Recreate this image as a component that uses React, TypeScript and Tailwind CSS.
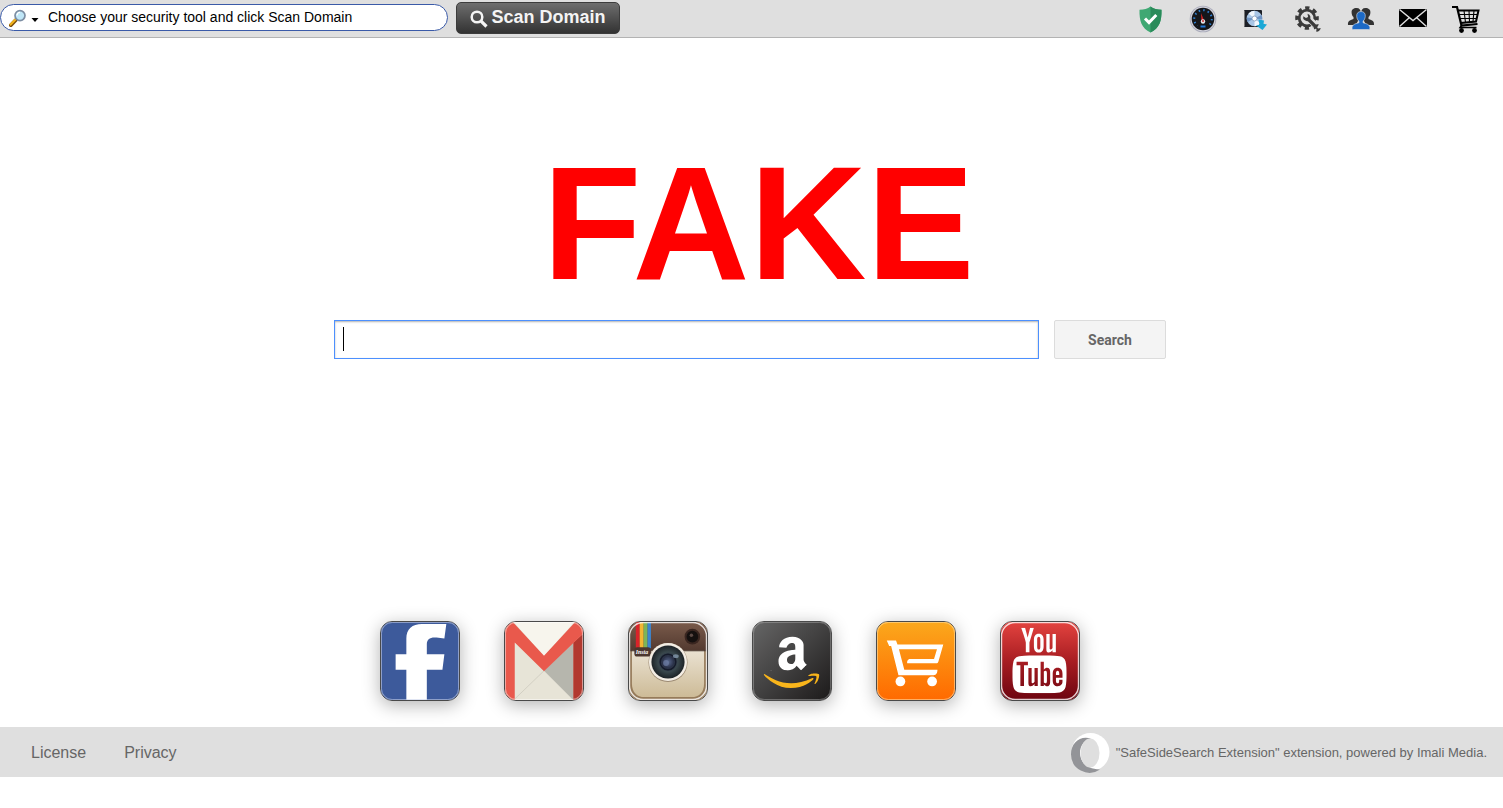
import type { ReactNode } from 'react'
import { FaAmazon } from 'react-icons/fa'
import { TfiYoutube } from 'react-icons/tfi'

interface LinkItem {
  label: string;
  icon: ReactNode;
}

function LensIcon() {
  return (
    <svg viewBox="0 0 18 18" className="h-[18px] w-[18px]" aria-hidden="true">
      <path d="M6.6 11.2 1.8 16.2" stroke="#7a4d0c" strokeWidth="3.8" strokeLinecap="round" />
      <path d="M6.2 10.8 1.6 15.6" stroke="#f2b31c" strokeWidth="2.2" strokeLinecap="round" />
      <circle cx="11" cy="6.6" r="5" fill="#bfe6f7" stroke="#7d8ea3" strokeWidth="1.7" />
      <path d="M8 6.4a3 3 0 0 1 3-3" stroke="#fff" strokeWidth="1.3" fill="none" />
    </svg>
  )
}

function ShieldIcon() {
  return (
    <svg viewBox="0 0 28 28" className="size-7" aria-hidden="true">
      <path d="M14.5 1.5c3 2.3 6.500 3 11 3.200.3 11-2 18.500-11 22.800C5.500 23.200 3.200 15.700 3.500 4.700c4.500-.2 8-.9 11-3.200Z" fill="#3fa873" />
      <path d="M14.5 1.5c3 2.3 6.500 3 11 3.200.3 11-2 18.500-11 22.800Z" fill="#2a8b5a" />
      <path d="m9 13.500 4 4 7.300-7.500" fill="none" stroke="#fff" strokeWidth="3" />
    </svg>
  )
}

function GaugeIcon() {
  return (
    <svg viewBox="0 0 28 28" className="size-7" aria-hidden="true">
      <circle cx="14" cy="14" r="13.3" fill="#a9abba" />
      <circle cx="14" cy="14" r="12.4" fill="#d3d3dc" />
      <circle cx="14" cy="14" r="11.3" fill="#14161b" />
      <circle cx="14" cy="14" r="8.8" fill="none" stroke="#2f7fd0" strokeWidth="2" strokeDasharray="1.5 3.1" />
      <path d="M7 22a10 10 0 0 0 14 0l-3-3h-8Z" fill="#14161b" />
      <path d="M11.500 21.500h5" stroke="#2277d8" strokeWidth="2" />
      <path d="m12 8 3 7.500-2.500.5Z" fill="#e02020" />
      <circle cx="14" cy="16.500" r="2.200" fill="#e4e6ec" />
      <circle cx="14" cy="16" r="1" fill="#c33" />
    </svg>
  )
}

function DiscIcon() {
  return (
    <svg viewBox="0 0 28 28" className="size-7" aria-hidden="true">
      <rect x="3" y="5" width="18" height="17" rx="1" fill="#1c1f26" />
      <path d="M3.5 6v15.500" stroke="#777" />
      <circle cx="13.500" cy="13.500" r="7.800" fill="#a9c6e6" />
      <path d="m13.500 13.500-6-5a8 8 0 0 1 6-2.800ZM13.500 13.500l6 5a8 8 0 0 1-6 2.800Z" fill="#f1f6fc" />
      <path d="m13.500 13.500-7 3.500a8 8 0 0 1-.7-4.500ZM13.500 13.500l7-3.500a8 8 0 0 1 .8 4.500Z" fill="#6f94c4" />
      <circle cx="13.500" cy="13.500" r="2.500" fill="#fff" stroke="#7d95b5" strokeWidth=".8" />
      <path d="m17.500 14.500 5.500 1-.5 3.200 3.500.8-4.500 5.500-6.500-4.500 3.500-.8Z" fill="#1ba8d6" />
    </svg>
  )
}

function GearIcon() {
  return (
    <svg viewBox="0 0 28 28" className="size-7" aria-hidden="true">
      <g fill="none" stroke="#3b3b3b">
        <circle cx="13" cy="13" r="10" strokeWidth="3.6" strokeDasharray="4.2 3.65" strokeDashoffset="2.1" />
        <circle cx="13" cy="13" r="7.800" strokeWidth="2.8" />
      </g>
      <path d="m15 14 10 9.500" stroke="#dfdfdf" strokeWidth="6.5" />
      <path d="m13.500 13.500 9 9" stroke="#3b3b3b" strokeWidth="3.2" />
      <path d="M9.200 11.200a4 4 0 0 0 6 4.300 4 4 0 0 0-1.700-6.800l.6 3.300-2.100 1Z" fill="#3b3b3b" />
      <path d="M20 24.500a4 4 0 0 1 5-5l-1.900 2.600.9 1.400 2.700-.4a4 4 0 0 1-4.500 3.500l.3-2.500-.8-.6Z" fill="#3b3b3b" />
    </svg>
  )
}

function PeopleIcon() {
  return (
    <svg viewBox="0 0 28 28" className="size-7" aria-hidden="true">
      <g fill="#333">
        <path d="M9.500 3c3 0 4.500 2 4.200 5-.3 3-1.500 4.500-2.500 5.400v2L9 20H1c-.3-4 1.500-4.700 5.500-6V12C5.300 11 4.700 9.500 4.600 7.500 4.400 4.500 6.500 3 9.500 3Z" />
        <path d="M18.500 3c-3 0-4.500 2-4.200 5 .3 3 1.500 4.500 2.500 5.400v2L19 20h8c.3-4-1.500-4.700-5.500-6V12c1.200-1 1.800-2.500 1.900-4.500.2-3-1.900-4.500-4.900-4.500Z" />
      </g>
      <path d="M14 6.500c3 0 4.500 2 4.300 4.800-.2 2.400-1 3.800-2.200 4.800v1.700c4.200 1 6.700 2 6.900 5.200 0 1-.5 1.500-1.500 1.500h-15c-1 0-1.500-.5-1.500-1.500.2-3.200 2.700-4.200 6.900-5.200v-1.700c-1.200-1-2-2.400-2.200-4.800C9.500 8.500 11 6.500 14 6.500Z" fill="#1d6ac6" stroke="#dfdfdf" strokeWidth=".6" />
    </svg>
  )
}

function MailIcon() {
  return (
    <svg viewBox="0 0 28 28" className="size-7" aria-hidden="true">
      <rect y="4" width="28" height="18" fill="#000" />
      <path d="M.5 4.500 14 15.500l13.500-11M.5 21.500l10-9M27.500 21.500l-10-9" fill="none" stroke="#dfdfdf" strokeWidth="1.4" />
    </svg>
  )
}

function CartIcon() {
  return (
    <svg viewBox="0 0 28 28" className="size-7" aria-hidden="true">
      <path d="M0 2h5l4.500 18.500L25.500 19" fill="none" stroke="#000" strokeWidth="2.2" />
      <path d="M6 5.500h20.500l-2.500 11L8.700 18" fill="none" stroke="#000" strokeWidth="2" />
      <path d="M7 9.500h18.500M8 13.500h16.500M12 5.500l1.500 12M17 5.500l.5 11.500M22 5.500l-1 11" stroke="#000" strokeWidth="1.1" />
      <path d="M9.500 20.500 8 22.500h16.500" fill="none" stroke="#000" strokeWidth="1.4" />
      <circle cx="9.500" cy="25.500" r="2.4" />
      <circle cx="22.500" cy="25.500" r="2.4" />
    </svg>
  )
}

function FacebookTile() {
  return (
    <svg viewBox="0 0 80 80" className="size-full" aria-hidden="true">
      <rect width="80" height="80" fill="#3d5a9b" />
      <path d="M26 80V49H15V33h11V17C26 7 32 2 42 2h25l-2 15-8-1c-7-.6-10 2-10 7v10h18l-2 16H47v31Z" fill="#fff" />
      <rect x=".5" y=".5" width="79" height="79" rx="11" fill="none" stroke="#c9d3ea" strokeOpacity=".6" />
    </svg>
  )
}

function GmailTile() {
  return (
    <svg viewBox="0 0 80 80" className="size-full" aria-hidden="true">
      <rect width="80" height="80" fill="#e7e4d7" />
      <path d="M9 0h62L40 35Z" fill="#f7f5ed" />
      <path d="M70 21v59L40 50Z" fill="#b6b6ad" />
      <path d="m10 79 30-29" stroke="#c9c6ba" strokeWidth=".7" />
      <path d="M70 21 80 12v68H70Z" fill="#b2392f" />
      <path d="M0 0h8l32 34.500L72 0h8v12L40 50.500 10 21v59H0Z" fill="#e9594c" />
      <rect x=".5" y=".5" width="79" height="79" rx="11" fill="none" stroke="#fff" strokeOpacity=".5" />
    </svg>
  )
}

function InstagramTile() {
  return (
    <svg viewBox="0 0 80 80" className="size-full" aria-hidden="true">
      <defs>
        <linearGradient id="insta-top" x2="0" y2="1">
          <stop stopColor="#7a5b4b" />
          <stop offset="1" stopColor="#533a30" />
        </linearGradient>
        <linearGradient id="insta-body" x2="0" y2="1">
          <stop stopColor="#eae2d2" />
          <stop offset="1" stopColor="#cdbb97" />
        </linearGradient>
        <radialGradient id="insta-lens">
          <stop stopColor="#5a6a90" />
          <stop offset=".35" stopColor="#2a3148" />
          <stop offset=".6" stopColor="#39474c" />
          <stop offset="1" stopColor="#1c2226" />
        </radialGradient>
      </defs>
      <rect width="80" height="80" fill="#967b5a" />
      <path d="M3 29h74v34c0 9-5 14-13 14H16C8 77 3 72 3 63Z" fill="url(#insta-body)" />
      <rect width="80" height="29" fill="url(#insta-top)" />
      <path d="M0 29.500h80" stroke="#3d2a23" />
      <path d="M7 0h4v27H7Z" fill="#d8232a" />
      <path d="M11 0h4v27h-4Z" fill="#f2b632" />
      <path d="M15 0h4v27h-4Z" fill="#7cb557" />
      <path d="M19 0h3.500v27H19Z" fill="#3c86cf" />
      <rect x="5.500" y="26" width="17" height="9.500" rx="3" fill="#4b362d" />
      <text x="7" y="33" fill="#fff" className="font-['Liberation_Serif',serif] text-[6px] font-bold italic">Insta</text>
      <circle cx="65" cy="15" r="8" fill="#3a2620" />
      <circle cx="65" cy="15" r="6" fill="#15100f" />
      <circle cx="64" cy="13.500" r="1.8" fill="#5c4a45" />
      <circle cx="40" cy="41.500" r="20" fill="#9c8a73" />
      <circle cx="40" cy="41" r="19.500" fill="#f3ede4" />
      <circle cx="40" cy="41" r="17" fill="url(#insta-lens)" />
      <circle cx="40" cy="41" r="8" fill="none" stroke="#151a2a" strokeWidth="1.5" />
      <ellipse cx="48" cy="35" rx="3" ry="2" fill="#9fb6cf" opacity=".6" />
      <circle cx="38" cy="42" r="3" fill="#6f7fa6" opacity=".7" />
      <rect x=".5" y=".5" width="79" height="79" rx="14" fill="none" stroke="#fff" strokeWidth="1.5" strokeOpacity=".8" />
    </svg>
  )
}

function AmazonTile() {
  return (
    <svg viewBox="0 0 80 80" className="size-full" aria-hidden="true">
      <defs>
        <linearGradient id="amazon-bg" x2="1" y2="1">
          <stop stopColor="#666" />
          <stop offset="1" stopColor="#1c1a1a" />
        </linearGradient>
        <clipPath id="amazon-mark">
          <path d="M14 12h52v33H53.500v3L46 51 32 49.500H14Z" />
        </clipPath>
        <clipPath id="amazon-smile">
          <path d="M6 52h7l18 6 19-2.500 4.500-2.500 4-2H73v25H6Z" />
        </clipPath>
      </defs>
      <rect width="80" height="80" fill="url(#amazon-bg)" />
      <g clipPath="url(#amazon-mark)">
        <FaAmazon x="14" y="12" size={52} color="#fff" />
      </g>
      <g clipPath="url(#amazon-smile)">
        <FaAmazon x="6" y="5" size={67} color="#f9b51b" />
      </g>
      <rect x=".5" y=".5" width="79" height="79" rx="11" fill="none" stroke="#aaa" strokeOpacity=".5" />
    </svg>
  )
}

function ShopTile() {
  return (
    <svg viewBox="0 0 80 80" className="size-full" aria-hidden="true">
      <defs>
        <linearGradient id="shop-bg" x2="0" y2="1">
          <stop stopColor="#fba81c" />
          <stop offset="1" stopColor="#ff6a00" />
        </linearGradient>
      </defs>
      <rect width="80" height="80" fill="url(#shop-bg)" />
      <path d="M10 19h9.500l1.500 4h47l-5 17.500c-.4 1.300-1 1.900-2.500 1.900H31c-.3-2 .5-4.400 3-4.400h24.500l3-10H22.500l5.500 21h34c0 3-1 5.500-4 5.500H22L14.500 24.500h-2Z" fill="#fff" />
      <circle cx="24" cy="61" r="5" fill="#fff" />
      <circle cx="56.500" cy="61" r="5" fill="#fff" />
      <rect x=".5" y=".5" width="79" height="79" rx="11" fill="none" stroke="#ffe0a8" strokeOpacity=".6" />
    </svg>
  )
}

function YoutubeTile() {
  return (
    <svg viewBox="0 0 80 80" className="size-full" aria-hidden="true">
      <defs>
        <linearGradient id="youtube-bg" x2="0" y2="1">
          <stop stopColor="#e3433f" />
          <stop offset=".5" stopColor="#a81d22" />
          <stop offset="1" stopColor="#6d0410" />
        </linearGradient>
      </defs>
      <rect width="80" height="80" fill="url(#youtube-bg)" />
      <TfiYoutube x="6" y="6" size={67} color="#fff" />
      <rect x=".5" y=".5" width="79" height="79" rx="14" fill="none" stroke="#fff" strokeWidth="1.5" strokeOpacity=".8" />
    </svg>
  )
}

const tools: LinkItem[] = [
  { label: 'Security', icon: <ShieldIcon /> },
  { label: 'Speed test', icon: <GaugeIcon /> },
  { label: 'Downloads', icon: <DiscIcon /> },
  { label: 'Settings', icon: <GearIcon /> },
  { label: 'Social', icon: <PeopleIcon /> },
  { label: 'Mail', icon: <MailIcon /> },
  { label: 'Shopping', icon: <CartIcon /> },
]

const sites: LinkItem[] = [
  { label: 'Facebook', icon: <FacebookTile /> },
  { label: 'Gmail', icon: <GmailTile /> },
  { label: 'Instagram', icon: <InstagramTile /> },
  { label: 'Amazon', icon: <AmazonTile /> },
  { label: 'Shop', icon: <ShopTile /> },
  { label: 'YouTube', icon: <YoutubeTile /> },
]

function Toolbar() {
  return (
    <header className="flex h-[38px] items-center border-b border-[#b3b3b3] bg-[#dfdfdf] pb-[2px]">
      <div className="flex h-[27px] w-[448px] items-center rounded-full border border-[#3a5aa8] bg-white pl-2">
        <button type="button" aria-label="Choose tool" className="flex items-center gap-1">
          <LensIcon />
          <svg viewBox="0 0 8 8" className="mt-1 size-2" aria-hidden="true">
            <path d="M.5 2h7L4 6Z" />
          </svg>
        </button>
        <input
          type="text"
          aria-label="Domain"
          defaultValue="Choose your security tool and click Scan Domain"
          className="ml-[9px] min-w-0 flex-1 bg-transparent pb-[2px] text-sm text-black outline-none"
        />
      </div>
      <button
        type="button"
        className="ml-2 flex h-8 w-[164px] items-center justify-center gap-[3px] rounded-[5px] border border-[#3c3c3c] bg-linear-to-b from-[#6e6e6e] via-[#505050] to-[#333] pb-[2px] text-lg leading-none font-bold text-[#f4f4f4]"
      >
        <svg viewBox="0 0 18 18" className="mt-1 size-[18px]" aria-hidden="true">
          <circle cx="7" cy="7" r="5.300" fill="none" stroke="currentColor" strokeWidth="2.5" />
          <path d="m10.800 10.800 5.700 5.700" stroke="currentColor" strokeWidth="3.2" />
        </svg>
        Scan Domain
      </button>
      <nav className="mt-[2px] mr-[23px] ml-auto flex w-[344px] justify-between">
        {tools.map((tool) => (
          <a key={tool.label} href="#" aria-label={tool.label}>{tool.icon}</a>
        ))}
      </nav>
    </header>
  )
}

export default function App() {
  return (
    <div className="flex min-h-screen flex-col bg-white font-['Liberation_Sans',Arial,sans-serif]">
      <Toolbar />
      <main className="flex flex-1 flex-col items-center pt-[104px] pb-[26px]">
        <h1 className="pl-[14px] text-[162px] leading-none font-bold text-[#ff0000]">FAKE</h1>
        <form className="mt-4 flex w-full justify-center gap-[15px] pr-[3px]" onSubmit={(e) => e.preventDefault()}>
          <div className="relative h-[39px] w-full max-w-[705px]">
            <input
              type="text"
              aria-label="Search the web"
              className="size-full border border-[#4d90fe] px-2 text-base caret-transparent shadow-[inset_0_1px_2px_rgba(0,0,0,0.3)] outline-none"
            />
            <span className="absolute top-[7px] left-[9px] h-6 w-px bg-black" />
          </div>
          <button type="submit" className="h-[39px] w-28 rounded-[2px] border border-[#dcdcdc] bg-[#f4f4f4] font-['Roboto',sans-serif] text-sm font-bold text-[#666]">
            Search
          </button>
        </form>
        <nav className="mt-auto flex gap-11 pr-[43px]">
          {sites.map((site) => (
            <a
              key={site.label}
              href="#"
              aria-label={site.label}
              className="size-20 overflow-hidden rounded-xl border border-[#4a4a4a] shadow-[0_4px_18px_rgba(0,0,0,0.3)]"
            >
              {site.icon}
            </a>
          ))}
        </nav>
      </main>
      <footer className="mb-[31px] flex h-[50px] items-center bg-[#dfdfdf] pt-[2px] pr-4 pl-[31px] text-[#666]">
        <a href="#" className="text-base">License</a>
        <a href="#" className="ml-[38px] text-base">Privacy</a>
        <div className="ml-auto flex items-center gap-[6px]">
          <svg viewBox="0 0 40 40" className="size-10" aria-hidden="true">
            <circle cx="20.500" cy="19" r="19" fill="#fff" />
            <path d="M30 36.500A18.500 18.500 0 0 1 1 21C1 10 10 2 21 5.500 14 7 10 13 10 20c0 9 7 16 20 16.500Z" fill="#939498" />
            <ellipse cx="20" cy="20" rx="9.500" ry="14.500" fill="#dfdfdf" />
          </svg>
          <p className="text-[13px]">"SafeSideSearch Extension" extension, powered by Imali Media.</p>
        </div>
      </footer>
    </div>
  )
}
